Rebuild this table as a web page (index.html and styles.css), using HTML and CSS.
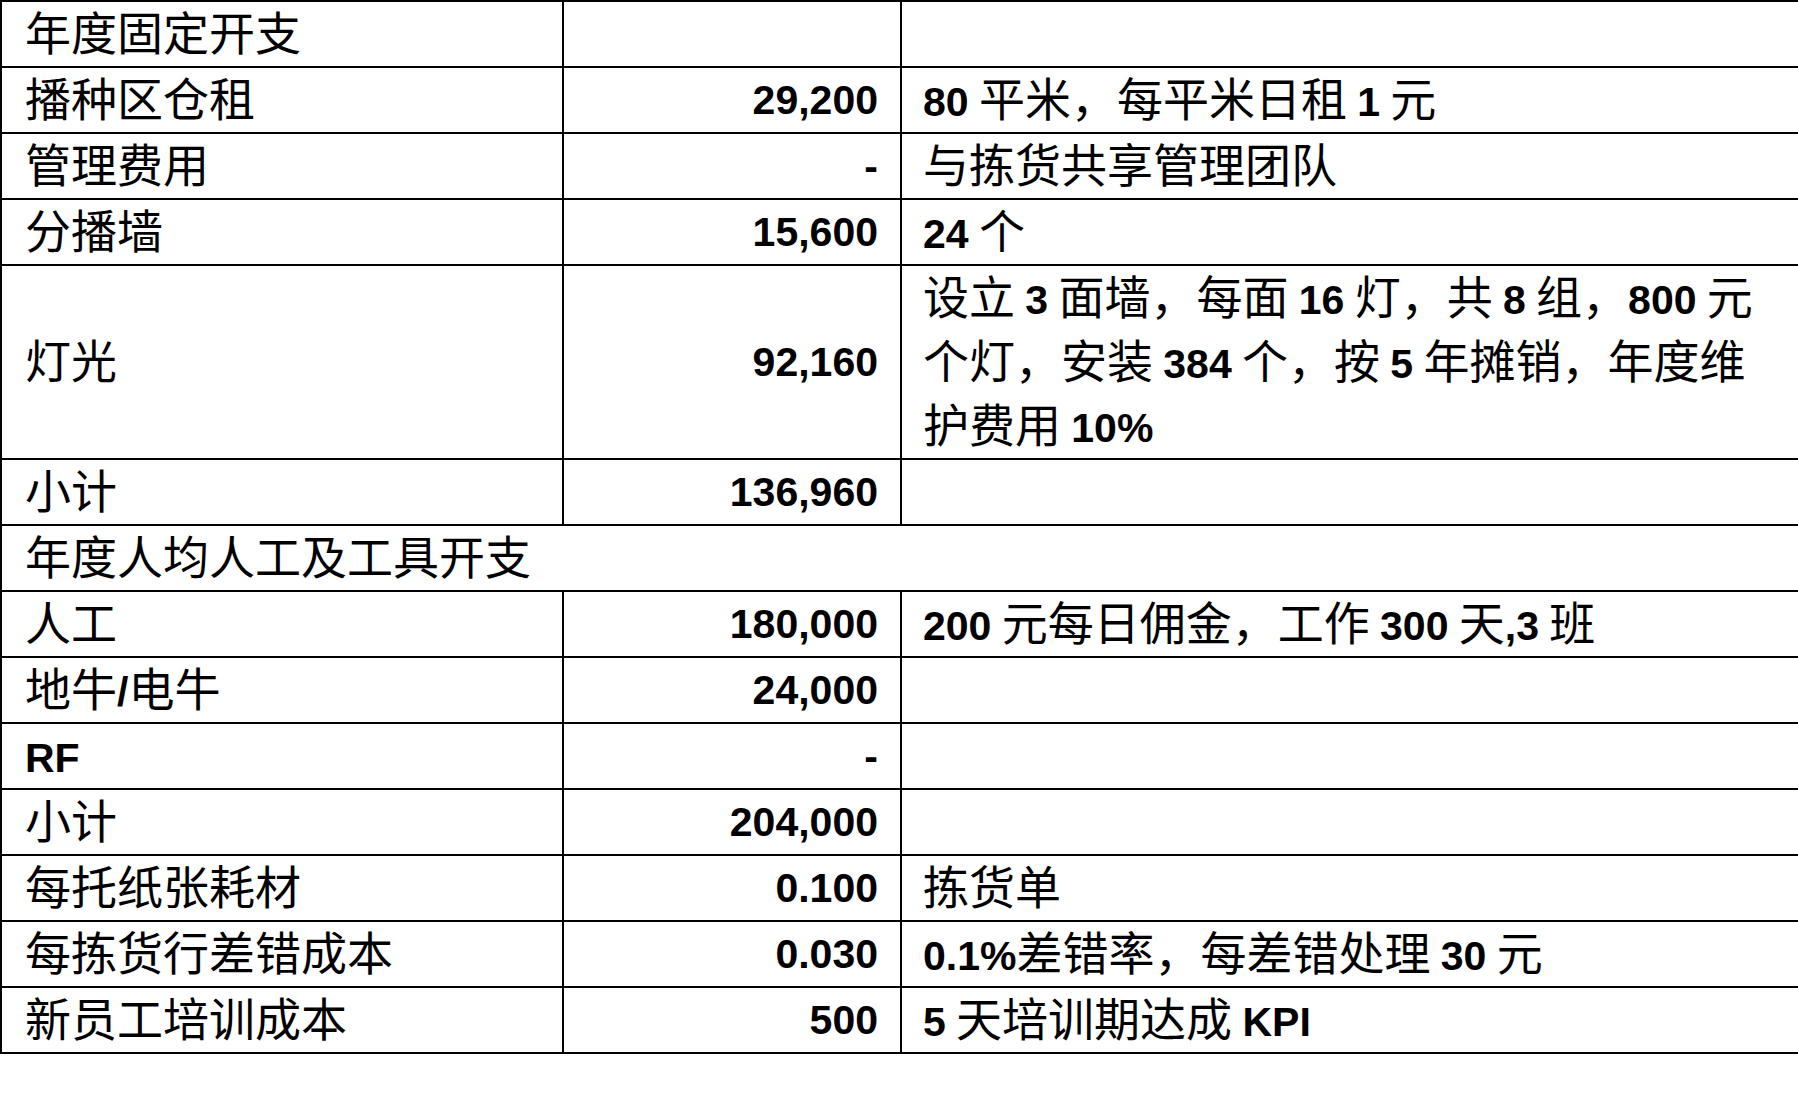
FILE: index.html
```html
<!DOCTYPE html>
<html lang="zh-CN">
<head>
<meta charset="utf-8">
<title>年度开支</title>
<link rel="stylesheet" href="styles.css">
</head>
<body>
<table class="cost">
  <colgroup>
    <col class="c1">
    <col class="c2">
    <col class="c3">
  </colgroup>
  <tbody>
    <tr><td><span class="t">年度固定开支</span></td><td class="num"></td><td class="note"></td></tr>
    <tr><td><span class="t">播种区仓租</span></td><td class="num">29,200</td><td class="note"><span class="t"><span class="en">80</span> 平米，每平米日租 <span class="en">1</span> 元</span></td></tr>
    <tr><td><span class="t">管理费用</span></td><td class="num">-</td><td class="note"><span class="t">与拣货共享管理团队</span></td></tr>
    <tr><td><span class="t">分播墙</span></td><td class="num">15,600</td><td class="note"><span class="t"><span class="en">24</span> 个</span></td></tr>
    <tr><td><span class="t">灯光</span></td><td class="num">92,160</td><td class="note"><span class="t">设立 <span class="en">3</span> 面墙，每面 <span class="en">16</span> 灯，共 <span class="en">8</span> 组，<span class="en">800</span> 元<br>个灯，安装 <span class="en">384</span> 个，按 <span class="en">5</span> 年摊销，年度维<br>护费用 <span class="en">10%</span></span></td></tr>
    <tr><td><span class="t">小计</span></td><td class="num">136,960</td><td class="note"></td></tr>
    <tr><td class="span" colspan="3"><span class="t">年度人均人工及工具开支</span></td></tr>
    <tr><td><span class="t">人工</span></td><td class="num">180,000</td><td class="note"><span class="t"><span class="en">200</span> 元每日佣金，工作 <span class="en">300</span> 天<span class="en">,3</span> 班</span></td></tr>
    <tr><td><span class="t">地牛<span class="en">/</span>电牛</span></td><td class="num">24,000</td><td class="note"></td></tr>
    <tr><td><span class="t"><span class="en">RF</span></span></td><td class="num">-</td><td class="note"></td></tr>
    <tr><td><span class="t">小计</span></td><td class="num">204,000</td><td class="note"></td></tr>
    <tr><td><span class="t">每托纸张耗材</span></td><td class="num">0.100</td><td class="note"><span class="t">拣货单</span></td></tr>
    <tr><td><span class="t">每拣货行差错成本</span></td><td class="num">0.030</td><td class="note"><span class="t"><span class="en">0.1%</span>差错率，每差错处理 <span class="en">30</span> 元</span></td></tr>
    <tr><td><span class="t">新员工培训成本</span></td><td class="num">500</td><td class="note"><span class="t"><span class="en">5</span> 天培训期达成 <span class="en">KPI</span></span></td></tr>
  </tbody>
</table>
</body>
</html>
```

FILE: styles.css
```css
html, body {
  margin: 0;
  padding: 0;
  background: #ffffff;
}

body {
  font-family: "Noto Sans CJK SC", "Liberation Sans", sans-serif;
  color: #000000;
}

.cost {
  width: 1798px;
  border-collapse: collapse;
  table-layout: fixed;
}

.c1 { width: 562px; }
.c2 { width: 338px; }
.c3 { width: 898px; }

.cost td {
  border: 2px solid #000000;
  height: 64px;
  padding: 0 20px 0 23px;
  font-size: 46px;
  line-height: 64px;
  vertical-align: middle;
  white-space: nowrap;
}

.cost td.note {
  border-right: none;
  padding-left: 21px;
}

.cost td.span {
  border-right: none;
  padding-left: 23px;
}

.cost td.num {
  text-align: right;
  padding-right: 22px;
  font-family: "Liberation Sans", sans-serif;
  font-size: 41px;
  font-weight: bold;
}

.t {
  line-height: 1.1;
  vertical-align: 4px;
}

.en {
  font-family: "Liberation Sans", sans-serif;
  font-size: 41px;
  font-weight: bold;
  line-height: 1;
}
```
